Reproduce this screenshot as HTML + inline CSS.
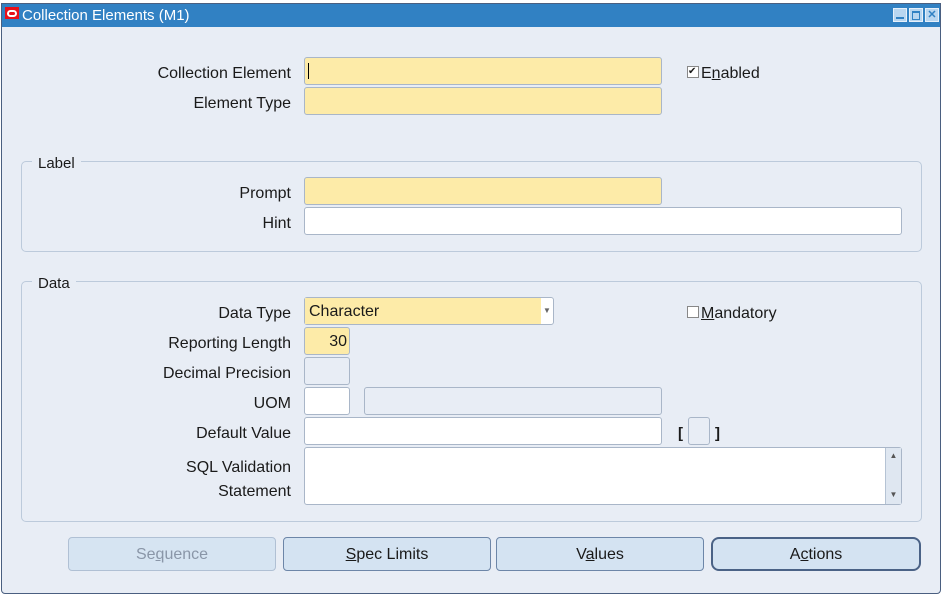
<!DOCTYPE html><html><head><style>
body{margin:0;width:942px;height:595px;background:#fff;font-family:"Liberation Sans",sans-serif;font-size:16px;color:#1a1a1a;position:relative;overflow:hidden}
.a{position:absolute}
#win{left:1px;top:3px;width:938px;height:589px;background:#e8edf5;border:1px solid #4a5f80;border-radius:0 0 4px 4px}
#tb{left:2px;top:4px;width:938px;height:23px;background:#3181c3;color:#fff;font-size:15px}
.lb{text-align:right;width:200px;left:91px;font-size:16px}
.f{border:1px solid #a9b6c8;border-radius:3px;box-sizing:border-box;background:#fff}
.y{background:#fdeba8}
.g{background:#e8edf5}
.box{border:1px solid #bccadb;border-radius:5px}
.bt{border:1px solid #6d86a8;border-radius:4px;background:#d4e3f2;text-align:center;line-height:34px;box-sizing:border-box;height:34px}
u{text-decoration:underline}
.ic{width:12px;height:12px;background:#b9d6f0;border:1px solid #e6f0fa;top:4px;color:#3181c3;font-size:11px;line-height:12px;text-align:center;font-weight:bold}
.t{margin-top:2px}
</style></head><body>
<div class="a" id="win"></div>
<div class="a" id="tb"><div class="a" style="left:3px;top:3px;width:14px;height:12px;background:#e8101a"><div class="a" style="left:2px;top:3px;width:6px;height:3px;border:2px solid #fff;border-radius:4px"></div></div><span class="a" style="left:20px;top:3px">Collection Elements (M1)</span>
<div class="a ic" style="left:891px"><div class="a" style="left:2px;top:8px;width:8px;height:2px;background:#3181c3"></div></div>
<div class="a ic" style="left:907px"><div class="a" style="left:2px;top:2px;width:6px;height:6px;border:1px solid #3181c3;border-top-width:2px"></div></div>
<div class="a ic" style="left:923px">✕</div></div>
<div class="a lb t" style="top:63px">Collection Element</div>
<div class="a f y" style="left:304px;top:57px;width:358px;height:28px"><div class="a" style="left:3px;top:5px;width:1px;height:16px;background:#000"></div></div>
<div class="a" style="left:687px;top:66px;width:10px;height:10px;background:#fff;border:1px solid #888;font-size:10px;line-height:10px">✔</div>
<div class="a t" style="left:701px;top:63px">E<u>n</u>abled</div>
<div class="a lb t" style="top:93px">Element Type</div>
<div class="a f y" style="left:304px;top:87px;width:358px;height:28px"></div>
<div class="a box" style="left:21px;top:161px;width:899px;height:89px"></div>
<div class="a" style="left:32px;top:155px;background:#e8edf5;padding:0 6px;font-size:15px">Label</div>
<div class="a lb t" style="top:183px">Prompt</div>
<div class="a f y" style="left:304px;top:177px;width:358px;height:28px"></div>
<div class="a lb t" style="top:213px">Hint</div>
<div class="a f" style="left:304px;top:207px;width:598px;height:28px"></div>
<div class="a box" style="left:21px;top:281px;width:899px;height:239px"></div>
<div class="a" style="left:32px;top:275px;background:#e8edf5;padding:0 6px;font-size:15px">Data</div>
<div class="a lb t" style="top:303px">Data Type</div>
<div class="a f" style="left:304px;top:297px;width:250px;height:28px"><div class="a y" style="left:0;top:0;width:236px;height:26px"></div><span class="a" style="left:4px;top:5px">Character</span><span class="a" style="left:238px;top:8px;font-size:8px;color:#666">▼</span></div>
<div class="a" style="left:687px;top:306px;width:10px;height:10px;background:#fff;border:1px solid #888"></div>
<div class="a t" style="left:701px;top:303px"><u>M</u>andatory</div>
<div class="a lb t" style="top:333px">Reporting Length</div>
<div class="a f y" style="left:304px;top:327px;width:46px;height:28px"><span class="a" style="right:2px;top:5px">30</span></div>
<div class="a lb t" style="top:363px">Decimal Precision</div>
<div class="a f g" style="left:304px;top:357px;width:46px;height:28px"></div>
<div class="a lb t" style="top:393px">UOM</div>
<div class="a f" style="left:304px;top:387px;width:46px;height:28px"></div>
<div class="a f g" style="left:364px;top:387px;width:298px;height:28px"></div>
<div class="a lb t" style="top:423px">Default Value</div>
<div class="a f" style="left:304px;top:417px;width:358px;height:28px"></div>
<div class="a" style="left:678px;top:425px;font-weight:bold;font-size:15px">[</div>
<div class="a f g" style="left:688px;top:417px;width:22px;height:28px"></div>
<div class="a" style="left:715px;top:425px;font-weight:bold;font-size:15px">]</div>
<div class="a lb t" style="top:457px">SQL Validation</div>
<div class="a lb t" style="top:481px">Statement</div>
<div class="a f" style="left:304px;top:447px;width:598px;height:58px"><div class="a" style="right:0;top:0;width:15px;height:56px;background:#dfe7f1;border-left:1px solid #b5c3d4;font-size:8px;color:#555;text-align:center"><div style="margin-top:3px">▲</div><div style="margin-top:30px">▼</div></div></div>
<div class="a bt" style="left:68px;top:537px;width:208px;color:#8a96a8;background:#d6e4f2;border-color:#b0c0d4">Se<u>q</u>uence</div>
<div class="a bt" style="left:283px;top:537px;width:208px"><u>S</u>pec Limits</div>
<div class="a bt" style="left:496px;top:537px;width:208px">V<u>a</u>lues</div>
<div class="a bt" style="left:711px;top:537px;width:210px;border:2px solid #4a6286;border-radius:8px;line-height:32px">A<u>c</u>tions</div>
</body></html>
